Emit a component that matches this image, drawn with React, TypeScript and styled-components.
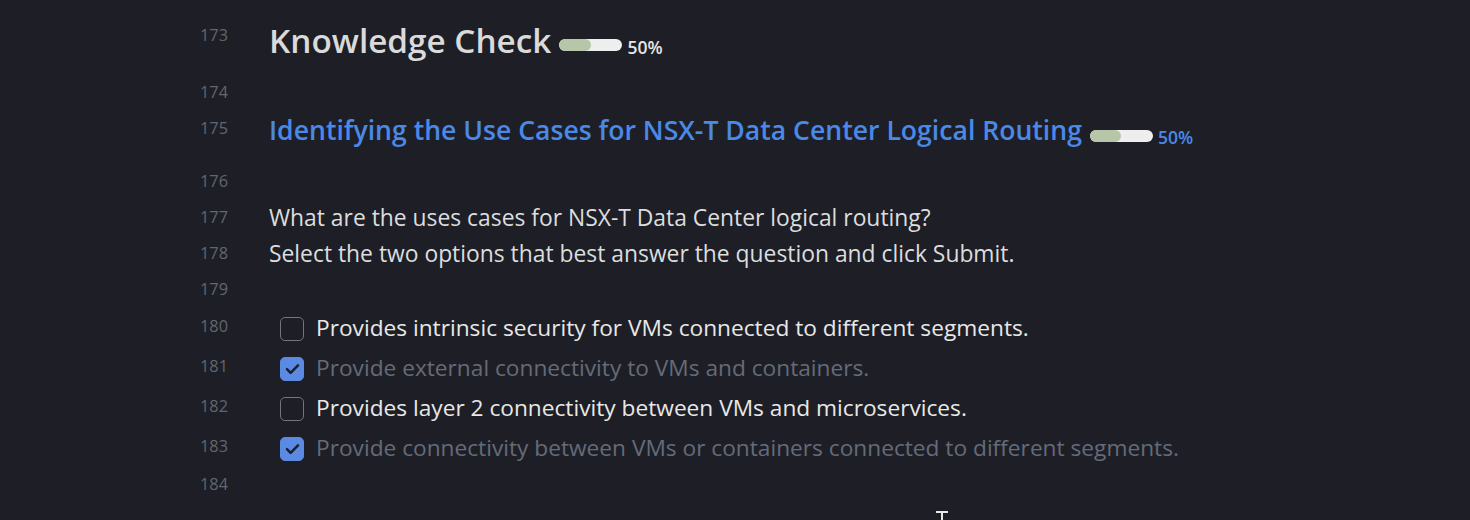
import React from "react";
import styled, { createGlobalStyle } from "styled-components";

const Global = createGlobalStyle`
  html, body {
    margin: 0;
    padding: 0;
    background: #1e1f26;
    height: 100%;
    overflow: hidden;
  }
  body {
    font-family: "Open Sans", "Noto Sans", sans-serif;
    color: #dcddde;
  }
`;

const Page = styled.div`
  position: relative;
  height: 520px;
  padding-top: 17px;
  box-sizing: border-box;
  background: #1e1f26;
`;

const Line = styled.div<{ $h?: number }>`
  display: grid;
  grid-template-columns: 228px 1fr;
  column-gap: 41px;
  height: ${(p) => p.$h ?? 36}px;
  box-sizing: border-box;
`;

const Num = styled.div`
  text-align: right;
  font-family: "Open Sans", sans-serif;
  font-size: 16.3px;
  line-height: 36px;
  color: #61666f;
`;

const Content = styled.div<{ $pt?: number }>`
  display: flex;
  align-items: flex-start;
  min-width: 0;
  padding-top: ${(p) => p.$pt ?? 0}px;
`;

const H1 = styled.div`
  display: flex;
  align-items: flex-end;
  padding-top: 1px;
  font-size: 33.3px;
  font-weight: 600;
  line-height: 44px;
  color: #dadada;
  white-space: nowrap;
`;

const H2 = styled.div`
  display: flex;
  align-items: flex-end;
  padding-top: 2px;
  font-size: 26.6px;
  font-weight: 600;
  line-height: 36px;
  color: #4a89e8;
  white-space: nowrap;
`;

const Progress = styled.span<{ $drop: number }>`
  display: inline-flex;
  align-items: center;
  margin-left: 8px;
  margin-bottom: ${(p) => p.$drop}px;
`;

const Track = styled.span`
  display: inline-block;
  width: 63px;
  height: 12px;
  border-radius: 6px;
  background: #eeeeee;
  overflow: hidden;
`;

const Fill = styled.span`
  display: block;
  height: 100%;
  background: #b7c5a8;
  border-radius: 6px;
`;

const Pct = styled.span<{ $color: string; $shift: number }>`
  margin-left: 5px;
  margin-top: ${(p) => p.$shift}px;
  font-size: 17.5px;
  font-weight: 600;
  line-height: 20px;
  color: ${(p) => p.$color};
`;

const Para = styled.div`
  font-size: 22.85px;
  line-height: 36px;
  color: #dcddde;
  white-space: nowrap;
`;

const Task = styled.label<{ $done?: boolean }>`
  display: flex;
  align-items: center;
  padding-left: 11px;
  gap: 12px;
  font-size: 22.7px;
  line-height: 36px;
  white-space: nowrap;
  color: ${(p) => (p.$done ? "#646b79" : "#e8e8e8")};
`;

const Box = styled.span<{ $checked?: boolean }>`
  flex: none;
  width: 24px;
  height: 24px;
  margin-top: 2px;
  box-sizing: border-box;
  border-radius: 5px;
  border: 1px solid ${(p) => (p.$checked ? "#5b8ae3" : "#707582")};
  background: ${(p) => (p.$checked ? "#5b8ae3" : "transparent")};
  display: flex;
  align-items: center;
  justify-content: center;
`;

const Cursor = styled.svg`
  position: absolute;
  left: 935px;
  top: 510px;
`;

const ProgressBar = ({ color, drop, shift }: { color: string; drop: number; shift: number }) => (
  <Progress $drop={drop}>
    <Track>
      <Fill style={{ width: "50%" }} />
    </Track>
    <Pct $color={color} $shift={shift}>50%</Pct>
  </Progress>
);

const Check = () => (
  <svg width="15" height="12" viewBox="0 0 15 12" fill="none">
    <path
      d="M2 6.2l3.6 3.6L13 2.4"
      stroke="#1c1f2b"
      strokeWidth="2.5"
      strokeLinecap="round"
      strokeLinejoin="round"
    />
  </svg>
);

const tasks = [
  { n: 180, text: "Provides intrinsic security for VMs connected to different segments.", done: false },
  { n: 181, text: "Provide external connectivity to VMs and containers.", done: true },
  { n: 182, text: "Provides layer 2 connectivity between VMs and microservices.", done: false },
  { n: 183, text: "Provide connectivity between VMs or containers connected to different segments.", done: true },
];

export default function App() {
  return (
    <Page>
      <Global />
      <Line $h={57}>
        <Num>173</Num>
        <Content>
          <H1>
            Knowledge Check
            <ProgressBar color="#e6e6e6" drop={5} shift={5} />
          </H1>
        </Content>
      </Line>
      <Line>
        <Num>174</Num>
        <Content />
      </Line>
      <Line $h={53}>
        <Num>175</Num>
        <Content>
          <H2>
            Identifying the Use Cases for NSX-T Data Center Logical Routing
            <ProgressBar color="#4a89e8" drop={1} shift={2} />
          </H2>
        </Content>
      </Line>
      <Line>
        <Num>176</Num>
        <Content />
      </Line>
      <Line>
        <Num>177</Num>
        <Content $pt={1}>
          <Para>What are the uses cases for NSX-T Data Center logical routing?</Para>
        </Content>
      </Line>
      <Line>
        <Num>178</Num>
        <Content $pt={1}>
          <Para>Select the two options that best answer the question and click Submit.</Para>
        </Content>
      </Line>
      <Line $h={37}>
        <Num>179</Num>
        <Content />
      </Line>
      {tasks.map((t, i) => (
        <Line key={t.n} $h={i === 3 ? 38 : 40}>
          <Num>{t.n}</Num>
          <Content $pt={2}>
            <Task $done={t.done}>
              <Box $checked={t.done}>{t.done && <Check />}</Box>
              {t.text}
            </Task>
          </Content>
        </Line>
      ))}
      <Line>
        <Num>184</Num>
        <Content />
      </Line>
      <Cursor width="14" height="12" viewBox="0 0 14 12">
        <path d="M1 2h12M7 2v10" stroke="#e8e8e8" strokeWidth="2" />
      </Cursor>
    </Page>
  );
}
